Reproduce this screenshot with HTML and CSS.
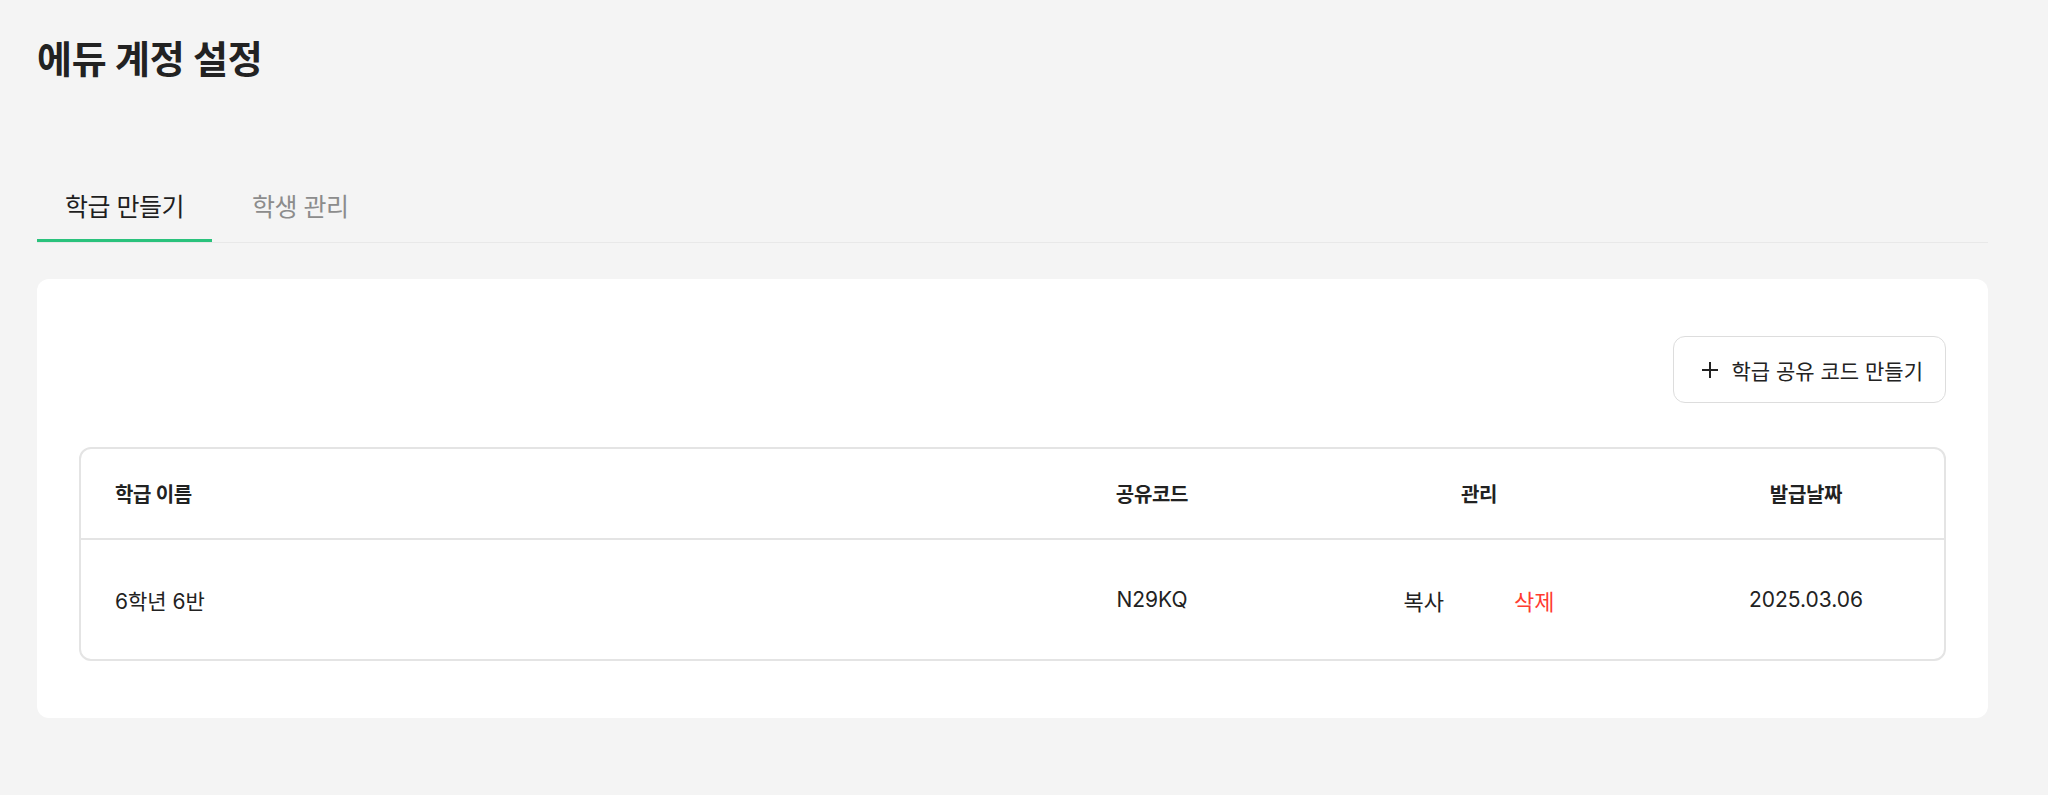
FILE: index.html
```html
<!DOCTYPE html>
<html lang="ko">
<head>
<meta charset="utf-8">
<title>에듀 계정 설정</title>
<link rel="stylesheet" href="styles.css">
</head>
<body>
<main class="page">
  <h1 class="title">에듀 계정 설정</h1>
  <nav class="tabs">
    <button class="tab tab-active">학급 만들기</button>
    <button class="tab">학생 관리</button>
  </nav>
  <section class="card">
    <div class="toolbar">
      <button class="create-btn">
        <svg class="plus" width="16" height="16" viewBox="0 0 16 16" aria-hidden="true"><path d="M8 0v16M0 8h16" stroke="#222" stroke-width="2" fill="none"/></svg>
        <span>학급 공유 코드 만들기</span>
      </button>
    </div>
    <div class="table">
      <div class="row row-head">
        <div class="cell cell-name">학급 이름</div>
        <div class="cell cell-center">공유코드</div>
        <div class="cell cell-center">관리</div>
        <div class="cell cell-center">발급날짜</div>
      </div>
      <div class="row row-body">
        <div class="cell cell-name">6학년 6반</div>
        <div class="cell cell-center">N29KQ</div>
        <div class="cell cell-center actions">
          <button class="action">복사</button>
          <button class="action action-danger">삭제</button>
        </div>
        <div class="cell cell-center">2025.03.06</div>
      </div>
    </div>
  </section>
</main>
</body>
</html>
```

FILE: styles.css
```css
* { box-sizing: border-box; }
html, body {
  margin: 0;
  background: #f4f4f4;
}
body {
  font-family: Inter, "Noto Sans CJK KR", sans-serif;
  color: #222;
}
button {
  font-family: inherit;
  background: none;
  border: none;
  padding: 0;
  cursor: pointer;
  color: inherit;
}
.page {
  padding: 0 60px 0 37px;
}
.title {
  margin: 0;
  padding-top: 33px;
  font-size: 38px;
  line-height: 52px;
  font-weight: 700;
  letter-spacing: -0.3px;
  color: #222;
}
.tabs {
  display: flex;
  gap: 12px;
  margin-top: 85px;
  border-bottom: 1px solid #e8e8e8;
}
.tab {
  padding: 20px 28px 15px;
  font-size: 25px;
  line-height: 34px;
  letter-spacing: -0.5px;
  color: #8c8c8c;
  border-bottom: 3px solid transparent;
}
.tab-active {
  color: #1f1f1f;
  border-bottom-color: #2ac27c;
}
.card {
  margin-top: 36px;
  background: #fff;
  border-radius: 12px;
  padding: 57px 42px;
}
.toolbar {
  display: flex;
  justify-content: flex-end;
}
.create-btn {
  display: flex;
  align-items: center;
  gap: 13px;
  height: 67px;
  padding: 0 22px 0 28px;
  border: 1.5px solid #dddddd;
  border-radius: 12px;
  background: #fff;
  font-size: 21px;
  color: #222;
}
.plus { display: block; }
.table {
  margin-top: 44px;
  border: 2px solid #e4e4e4;
  border-radius: 12px;
}
.row {
  display: grid;
  grid-template-columns: 1fr 208px 208px 208px;
  column-gap: 119px;
  align-items: center;
  padding: 0 34px;
}
.row-head {
  height: 91px;
  border-bottom: 2px solid #e4e4e4;
  font-size: 20px;
  font-weight: 700;
  letter-spacing: -0.3px;
}
.row-body {
  height: 119px;
  font-size: 21px;
}
.cell-center {
  text-align: center;
}
.actions {
  display: flex;
  justify-content: center;
  gap: 70px;
}
.action {
  font-size: 22px;
  color: #222;
}
.action-danger {
  color: #ff3b30;
}
```
